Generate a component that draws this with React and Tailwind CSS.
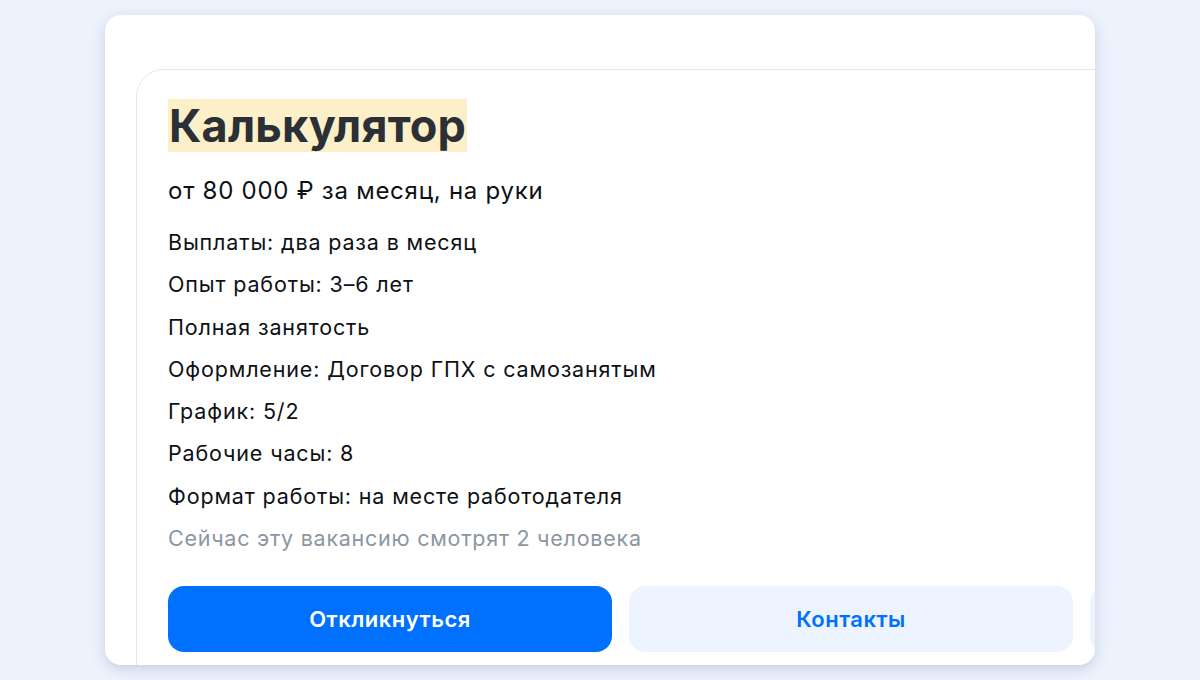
import React from 'react';

const details = [
  'Выплаты: два раза в месяц',
  'Опыт работы: 3–6 лет',
  'Полная занятость',
  'Оформление: Договор ГПХ с самозанятым',
  'График: 5/2',
  'Рабочие часы: 8',
  'Формат работы: на месте работодателя',
];

const App = () => {
  return (
    <div
      className="w-[1200px] h-[680px] bg-[#edf3fd] pt-[15px] pl-[105px] overflow-hidden"
      style={{ fontFamily: 'Inter, "Noto Sans", sans-serif' }}
    >
      <div className="w-[990px] h-[650px] bg-white rounded-[16px] shadow-[0_4px_14px_rgba(60,80,110,0.22)] overflow-hidden pt-[54px] pl-[31px]">
        <div className="w-[1100px] h-[700px] border border-[#e2e7ee] rounded-[28px] pt-[29px] pl-[31px]">
          <h1 className="inline-block bg-[#fdefc8] text-[45px] leading-[53px] font-bold text-[#2a3036] px-[1px] tracking-[0.2px]">
            Калькулятор
          </h1>
          <p className="mt-[23px] text-[24px] leading-[32px] text-[#0d1115] tracking-[0.75px]">
            от 80 000 ₽ за месяц, на руки
          </p>
          <div className="mt-[21px] flex flex-col gap-[14px]">
            {details.map((d) => (
              <p key={d} className="text-[21.5px] leading-[28.3px] text-[#0d1115] tracking-[0.85px]">
                {d}
              </p>
            ))}
            <p className="text-[21.5px] leading-[28.3px] text-[#8b96a3] tracking-[0.75px]">
              Сейчас эту вакансию смотрят 2 человека
            </p>
          </div>
          <div className="mt-[34px] flex gap-[17px]">
            <button className="w-[444px] h-[66px] rounded-[16px] bg-[#0070ff] text-white text-[22px] font-semibold tracking-[0.5px]">
              Откликнуться
            </button>
            <button className="w-[444px] h-[66px] rounded-[16px] bg-[#edf4ff] text-[#0070ff] text-[22px] font-semibold tracking-[0.5px]">
              Контакты
            </button>
            <button className="w-[66px] h-[66px] rounded-[16px] bg-[#edf4ff]"></button>
          </div>
        </div>
      </div>
    </div>
  );
};

export default App;
